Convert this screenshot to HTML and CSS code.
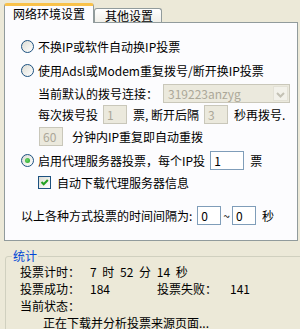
FILE: index.html
```html
<!DOCTYPE html>
<html lang="zh-CN">
<head>
    <meta charset="UTF-8">
    <title>投票设置</title>
    <link rel="stylesheet" href="styles.css">
</head>
<body>
    <div class="tabs">
        <div class="tab active">网络环境设置</div>
        <div class="tab">其他设置</div>
    </div>

    <!-- 网络环境设置 -->
    <div class="panel">
        <div class="row r1"><span class="radio"></span>不换IP或软件自动换IP投票</div>
        <div class="row r2"><span class="radio"></span>使用Adsl或Modem重复拨号/断开换IP投票</div>
        <div class="row sub r3">当前默认的拨号连接：
            <div class="select">
                <span class="select-text">319223anzyg</span>
                <span class="select-btn">
                    <svg width="13" height="15" viewBox="0 0 13 15"><path d="M3 6l3.5 3.5L10 6" stroke="#c3c1b4" stroke-width="2" fill="none"/></svg>
                </span>
            </div>
        </div>
        <div class="row sub r4">每次拨号投<span class="field off">1</span>票, 断开后隔<span class="field off">3</span>秒再拨号.</div>
        <div class="row sub r5"><span class="field off first">60</span>分钟内IP重复即自动重拨</div>
        <div class="row r6"><span class="radio on"></span>启用代理服务器投票，每个IP投<span class="field wide">1</span>票</div>
        <div class="row sub r7">
            <span class="check">
                <svg width="11" height="11" viewBox="0 0 11 11"><path d="M2.5 5l2.2 2.3L8.8 3" stroke="#21a121" stroke-width="2" fill="none"/></svg>
            </span>自动下载代理服务器信息
        </div>
        <div class="row r8">以上各种方式投票的时间间隔为:<span class="field">0</span><span class="tilde">~</span><span class="field">0</span>秒</div>
    </div>

    <!-- 统计 -->
    <fieldset class="stats">
        <legend>统计</legend>
        <div class="stat-row">
            <span class="stat-label">投票计时：</span>
            <span class="stat-value">7 时 52 分 14 秒</span>
        </div>
        <div class="stat-row">
            <span class="stat-label">投票成功：</span>
            <span class="stat-value short">184</span>
            <span class="stat-label second">投票失败：</span>
            <span class="stat-value">141</span>
        </div>
        <div class="stat-row">
            <span class="stat-label">当前状态：</span>
        </div>
        <div class="stat-row status">正在下载并分析投票来源页面...</div>
    </fieldset>
</body>
</html>
```

FILE: styles.css
```css
body {
    margin: 0;
    overflow: hidden;
    background-color: #ece9d8;
    font-family: "Noto Sans CJK SC", "Noto Sans", sans-serif;
    font-size: 12px;
    color: #000;
}

/* tabs */
.tabs {
    display: flex;
    align-items: flex-end;
    height: 22px;
    padding-left: 4px;
}
.tab {
    box-sizing: border-box;
    height: 14px;
    padding: 0 8px 0 10px;
    line-height: 13px;
    border: 1px solid #919b9c;
    border-bottom: none;
    border-radius: 3px 3px 0 0;
    background: linear-gradient(#ffffff, #f0efe9);
}
.tab.active {
    position: relative;
    height: 20px;
    margin-bottom: -1px;
    padding: 0 8px 0 8px;
    line-height: 16px;
    border-top: 3px solid #f9c24a;
    background: #fcfcfe;
}

/* panel */
.panel {
    box-sizing: border-box;
    width: 294px;
    height: 219px;
    margin-left: 4px;
    padding: 11px 0 0 16px;
    background-color: #fcfcfe;
    border: 1px solid #919b9c;
}
.row {
    display: flex;
    align-items: center;
    height: 24px;
    white-space: nowrap;
}
.sub {
    margin-left: 17px;
}
.r3 { height: 22px; }
.r4 { height: 21px; }
.r5 { height: 22px; }
.r6 { margin-top: 1px; }
.r7 { height: 21px; }
.r8 { margin-top: 10px; }

.radio {
    box-sizing: border-box;
    position: relative;
    width: 13px;
    height: 13px;
    margin-right: 4px;
    border: 1px solid #1c5180;
    border-radius: 50%;
    background: linear-gradient(135deg, #dcdcd4, #ffffff);
}
.radio.on::after {
    content: "";
    position: absolute;
    left: 3px;
    top: 3px;
    width: 5px;
    height: 5px;
    border-radius: 50%;
    background: radial-gradient(circle at 40% 40%, #6ad66a, #21a121);
}
.check {
    box-sizing: border-box;
    display: flex;
    width: 13px;
    height: 13px;
    margin-right: 6px;
    border: 1px solid #1c5180;
    background: linear-gradient(135deg, #dcdcd4, #ffffff);
}

.field {
    box-sizing: border-box;
    width: 24px;
    height: 19px;
    margin: 0 6px 0 5px;
    padding-left: 3px;
    line-height: 17px;
    border: 1px solid #7f9db9;
    background: #fff;
}
.field.off {
    border-color: #c9c7ba;
    background: #ebe9dd;
    color: #aca899;
}
.field.first {
    margin: 0 9px 0 1px;
}
.field.wide {
    width: 34px;
    margin: 0 6px 0 5px;
}
.tilde {
    margin: 0 -3px 0 -4px;
}

.select {
    box-sizing: border-box;
    display: flex;
    align-items: center;
    width: 127px;
    height: 19px;
    margin-left: 5px;
    padding: 1px;
    border: 1px solid #c9c7ba;
    background: #ebe9dd;
    color: #aca899;
}
.select-text {
    flex: 1;
    padding-left: 3px;
}
.select-btn {
    display: flex;
    justify-content: center;
    width: 15px;
    height: 15px;
    border: 1px solid #e3e1d6;
    box-sizing: border-box;
    background: #f2f1ea;
}

/* stats */
.stats {
    width: 320px;
    margin: 7px 0 0 5px;
    padding: 0 0 20px 6px;
    border: 1px solid #d0d0bf;
    border-radius: 3px;
}
.stats legend {
    padding: 0 1px;
    line-height: 16px;
    color: #0046d5;
}
.stat-row {
    display: flex;
    align-items: center;
    height: 17px;
    margin-left: 8px;
    line-height: 14px;
    white-space: pre;
}
.stat-row:first-of-type {
    margin-top: -1px;
}
.stat-label {
    width: 70px;
}
.stat-label.second {
    width: 73px;
}
.stat-value {
    word-spacing: 3px;
}
.stat-value.short {
    width: 67px;
}
.status {
    margin-left: 31px;
}
```
